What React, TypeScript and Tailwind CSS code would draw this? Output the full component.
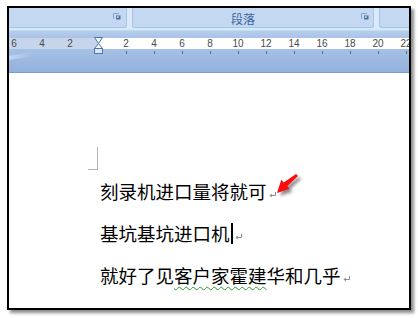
import React from 'react'

// Ruler cells: 28px each, the first one starts 9px left of the frame edge
const rulerNums = [6, 4, 2, 0, 2, 4, 6, 8, 10, 12, 14, 16, 18, 20, 22]

function Launcher() {
  return (
    <svg width="8" height="7" viewBox="0 0 8 7" className="block">
      <path d="M0.5 6V0.5H6" fill="none" stroke="#8aa6cc" strokeWidth="1" />
      <rect x="3" y="2.5" width="4.5" height="4" fill="#4d6f9e" />
      <rect x="3.8" y="3.3" width="2" height="1.6" fill="#c9dcf2" />
    </svg>
  )
}

function ReturnMark() {
  return (
    <svg width="8" height="6" viewBox="0 0 8 6" className="ml-[2px] mt-[7px] shrink-0">
      <path d="M6.5 0V3.5H1.5" fill="none" stroke="#8c8c8c" strokeWidth="1" />
      <path d="M0.5 3.5L2.8 1.5V5.5Z" fill="#8c8c8c" />
    </svg>
  )
}

function Hourglass() {
  return (
    <svg width="9" height="17" viewBox="0 0 9 17" className="absolute left-[85px] top-[7px]">
      <path d="M0.5 0.5H8.5L4.5 6.5Z" fill="#f3f6fb" stroke="#4f74ab" />
      <path d="M4.5 6.5L8.5 11.5H0.5Z" fill="#f3f6fb" stroke="#4f74ab" />
      <rect x="0.5" y="11.5" width="8" height="5" fill="#dde7f4" stroke="#4f74ab" />
    </svg>
  )
}

function RedArrow() {
  const pts = '4,23 16.6,18.8 14.2,16.3 25,6 23,4 10.7,12.5 8.3,9.7'
  return (
    <svg width="36" height="34" viewBox="0 0 36 34" className="absolute left-[264px] top-[162px]">
      <defs>
        <filter id="blur" x="-30%" y="-30%" width="160%" height="160%">
          <feGaussianBlur stdDeviation="1.8" />
        </filter>
      </defs>
      <polygon points={pts} fill="#444" opacity="0.6" transform="translate(3 3)" filter="url(#blur)" />
      <polygon points={pts} fill="#ff0a0a" />
    </svg>
  )
}

export default function App() {
  return (
    <div className="w-[418px] h-[318px] bg-white pt-[6px] pl-[7px]">
      <div className="relative w-[404px] h-[304px] border-2 border-black bg-white shadow-[3px_3px_3px_rgba(0,0,0,0.45)] overflow-hidden">
        {/* ribbon groups */}
        <div className="flex h-[20px] bg-[#d3e3f6]">
          <div className="w-[118px] flex justify-end items-start pt-[5px] pr-[5px] bg-[#c4d9f1] border-r border-b border-[#a9c4e6] rounded-br-[3px]">
            <Launcher />
          </div>
          <div className="w-[5px] bg-[#dce9f8]" />
          <div className="w-[242px] flex items-start pt-[3px] bg-[#c4d9f1] border-l border-r border-b border-[#a9c4e6] rounded-b-[3px]">
            <span className="ml-[98px] text-[12px] leading-[16px] text-[#3f659d] font-['Noto_Sans_CJK_SC','Noto_Sans',sans-serif]">
              段落
            </span>
            <span className="ml-auto mt-[2px] mr-[4px]">
              <Launcher />
            </span>
          </div>
          <div className="w-[5px] bg-[#dce9f8]" />
          <div className="flex-1 bg-[#c4d9f1] border-l border-b border-[#a9c4e6] rounded-bl-[3px]" />
        </div>
        <div className="h-[2px] bg-[#cdeef8]" />

        {/* ruler */}
        <div className="relative h-[43px] bg-[linear-gradient(to_bottom,#b9cfec_0px,#a9c2e6_8px,#a6c0e5_20px,#93b1db_42px)] border-b border-[#7d9ecb]">
          <div className="h-[8px] border-t border-[#c6d8f0]" />
          <div className="flex h-[11px] ml-[-9px] bg-[linear-gradient(to_right,#c7d5eb_98px,#ffffff_98px)] font-['Liberation_Sans',sans-serif] text-[10px] leading-[11px] text-[#4a4a4a]">
            {rulerNums.map((n, i) => (
              <div key={i} className="w-[28px] shrink-0 text-center">
                {i === 3 ? '' : n}
              </div>
            ))}
          </div>
          <div className="flex ml-[-9px] pt-[2px]">
            {rulerNums.map((n, i) => (
              <div key={i} className="w-[28px] shrink-0 flex justify-center">
                {i > 3 && <div className="w-px h-[3px] bg-[#5a6a80]" />}
              </div>
            ))}
          </div>
          <div className="absolute left-0 top-[24px] w-[24px] h-[4px] bg-[linear-gradient(to_right,#c4d6ee,transparent)] skew-y-[-8deg]" />
          <Hourglass />
        </div>

        {/* document */}
        <div className="pl-[79px] font-['Noto_Sans_CJK_SC','Noto_Sans',sans-serif] text-[18.5px] text-black">
          <div className="mt-[74px] w-[10px] h-[23px] border-r border-b border-[#b4b4b4]" />
          <div className="flex items-center h-[42px] pl-[12px]">
            <span className="leading-[22px]">刻录机进口量将就可</span>
            <ReturnMark />
          </div>
          <div className="flex items-center h-[42px] pl-[12px]">
            <span className="leading-[22px]">基坑基坑进口机</span>
            <span className="w-[2px] h-[21px] bg-black ml-[1px]" />
            <ReturnMark />
          </div>
          <div className="flex items-center h-[42px] pl-[12px]">
            <span className="leading-[22px]">
              就好了见
              <span className="underline decoration-wavy decoration-[#2a9a2a] decoration-1 underline-offset-[3px]">客户家霍建</span>
              华和几乎
            </span>
            <ReturnMark />
          </div>
        </div>
        <RedArrow />
      </div>
    </div>
  )
}
